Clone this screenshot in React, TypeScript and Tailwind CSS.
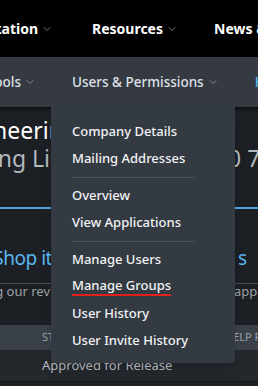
import { ChevronDown } from 'lucide-react';

const font = { fontFamily: '"Noto Sans", "Open Sans", sans-serif' };

function Chevron() {
  return <ChevronDown className="ml-[3px] h-3 w-3 shrink-0 text-gray-400" strokeWidth={1.5} />;
}

const menu = [
  ['Company Details', 'Mailing Addresses'],
  ['Overview', 'View Applications'],
  ['Manage Users', 'Manage Groups', 'User History', 'User Invite History'],
];

function Dropdown() {
  return (
    <div className="absolute left-[51px] top-[107px] w-[184px] rounded-b bg-[#343a42] pb-[9px] pt-[11px] pl-[21px] pr-[40px] shadow-lg">
      {menu.map((group, gi) => (
        <div key={gi}>
          {gi > 0 && <div className="mb-[4px] mt-[5px] h-px bg-[#4a5058]" />}
          {group.map((item) => (
            <div key={item} className="flex h-[27px] items-center text-[13px] font-medium text-[#f1f3f5]">
              <span className={item === 'Manage Groups' ? 'border-b-2 border-[#e0201b] leading-[17px]' : 'leading-[17px]'}>
                {item}
              </span>
            </div>
          ))}
        </div>
      ))}
    </div>
  );
}

export default function App() {
  return (
    <div className="relative h-[386px] w-[258px] overflow-hidden bg-[#1c1f23] whitespace-nowrap" style={font}>
      <div className="flex h-[57px] items-center bg-black text-[14px] font-bold text-white">
        <div className="flex w-[38px] shrink-0 justify-end">Documentation</div>
        <Chevron />
        <div className="ml-[39px] flex shrink-0 items-center">
          Resources
          <Chevron />
        </div>
        <div className="ml-[36px] shrink-0">News &amp; Events</div>
      </div>
      <div className="flex h-[50px] items-center bg-[#353a42] text-[13.5px] font-medium text-[#dde1e6]">
        <div className="flex w-[21px] shrink-0 justify-end">Tools</div>
        <Chevron />
        <div className="ml-[36px] flex shrink-0 items-center">
          Users &amp; Permissions
          <Chevron />
        </div>
        <div className="ml-[36px] shrink-0 text-[#5bb5f0]">Help</div>
      </div>
      <div className="h-[5px] bg-gradient-to-b from-[#0d0e10] to-[#1c1f23]" />
      <div className="mt-[4px] flex h-[28px] items-center text-[23px] text-white">
        <div className="flex w-[77px] shrink-0 justify-end">Engineering</div>
      </div>
      <div className="flex h-[28px] items-center justify-between text-[23px] text-[#b3b8bd]">
        <div className="flex w-[50px] shrink-0 justify-end">Tracking Li</div>
        <div className="w-[30px] shrink-0">0 7</div>
      </div>
      <div className="mt-[35px] h-[2px] bg-[#4aa9e0]" />
      <div className="mt-[34px] flex h-[30px] items-center justify-between text-[19px] tracking-tight text-[#5bb5f0]">
        <div className="flex w-[52px] shrink-0 justify-end">Shop it</div>
        <div className="w-[20px] shrink-0">s</div>
      </div>
      <div className="mt-[10px] h-px bg-[#4a4f55]" />
      <div className="flex h-[16px] items-center justify-between text-[13px] text-[#9ca1a7]">
        <div className="flex w-[50px] shrink-0 justify-end">Reviewing our rev</div>
        <div className="w-[24px] shrink-0">approval</div>
      </div>
      <div className="mt-[25px] flex h-[25px] items-center bg-[#3a4048] pl-[42px] text-[11px] uppercase text-[#9ca1a7]">
        <span className="w-[183px] shrink-0">Status</span>
        <span className="shrink-0">Help Request</span>
      </div>
      <div className="flex h-[32px] items-center border-b border-[#15171a] bg-[#24272c] pl-[42px] text-[13px] text-[#b8bcc1]">
        Approved for Release
      </div>
      <Dropdown />
    </div>
  );
}
